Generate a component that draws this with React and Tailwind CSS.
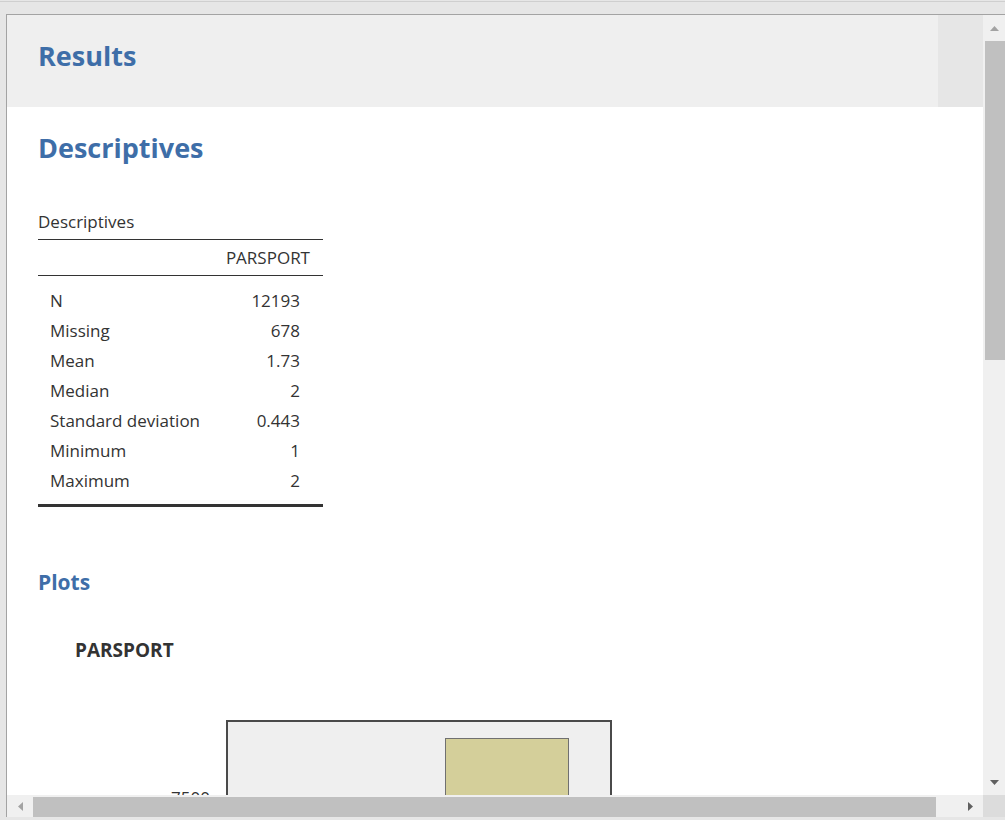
import React from 'react';

const rows = [
  ['N', '12193'],
  ['Missing', '678'],
  ['Mean', '1.73'],
  ['Median', '2'],
  ['Standard deviation', '0.443'],
  ['Minimum', '1'],
  ['Maximum', '2'],
];

const Arrow = ({ dir, color }) => {
  const points = {
    up: '0,5 9,5 4.5,0',
    down: '0,0 9,0 4.5,5',
    left: '5,0 5,9 0,4.5',
    right: '0,0 0,9 5,4.5',
  }[dir];
  const vertical = dir === 'up' || dir === 'down';
  return (
    <svg width={vertical ? 9 : 5} height={vertical ? 5 : 9} viewBox={vertical ? '0 0 9 5' : '0 0 5 9'}>
      <polygon points={points} fill={color} />
    </svg>
  );
};

const App = () => {
  return (
    <div
      className="w-[1005px] h-[820px] bg-[#e6e6e6] overflow-hidden flex flex-col"
      style={{ fontFamily: '"Open Sans", "Noto Sans", sans-serif' }}
    >
      {/* top strip */}
      <div className="mt-px h-[13px] border-t border-[#cfcfcf]" />

      <div className="pl-[6px]">
        <div className="border-l border-t border-[#a3a3a3] flex flex-col">
          <div className="flex h-[780px]">
            {/* content */}
            <div className="flex-1 bg-white overflow-hidden">
              <div className="flex h-[92px]">
                <div className="flex-1 bg-[#efefef] pl-[31px] pt-[23px]">
                  <h1 className="text-[27px] leading-[36px] font-bold text-[#3e6ea8]">Results</h1>
                </div>
                <div className="w-[45px] bg-[#e6e6e6]" />
              </div>

              <div className="pl-[31px]">
                <h2 className="mt-[23px] text-[27px] leading-[36px] font-bold text-[#3e6ea8]">Descriptives</h2>

                <div className="mt-[44px] w-[285px] text-[17px] text-[#333]">
                  <div className="leading-[24px] pb-[5px]">Descriptives</div>
                  <div className="border-t border-b border-[#333] h-[37px] flex items-center justify-end pr-[13px] leading-[24px]">
                    PARSPORT
                  </div>
                  <div className="pt-[10px] pb-[8px] border-b-[3px] border-[#333]">
                    {rows.map(([label, value]) => (
                      <div key={label} className="flex justify-between h-[30px] leading-[30px] pl-[12px] pr-[23px]">
                        <span>{label}</span>
                        <span>{value}</span>
                      </div>
                    ))}
                  </div>
                </div>

                <h3 className="mt-[61px] text-[21px] leading-[28px] font-bold text-[#3e6ea8]">Plots</h3>

                <div className="mt-[42px] pl-[37px] text-[19px] leading-[24px] font-bold text-[#333]">PARSPORT</div>

                <div className="mt-[58px] flex">
                  <div className="w-[188px] pr-[16px] pt-[66px] text-right text-[17px] leading-[24px] text-[#333]">7500</div>
                  <div className="w-[386px] h-[320px] border-2 border-[#4a4a4a] bg-[#efefef] pl-[217px] pt-[16px]">
                    <div className="w-[124px] h-[300px] border border-[#707070] bg-[#d4cf9a]" />
                  </div>
                </div>
              </div>
            </div>

            {/* vertical scrollbar */}
            <div className="w-[22px] bg-[#f0f0f0] flex flex-col">
              <div className="h-[26px] flex items-center justify-center">
                <Arrow dir="up" color="#a3a3a3" />
              </div>
              <div className="h-[319px] ml-[2px] bg-[#c0c0c0]" />
              <div className="flex-1" />
              <div className="h-[26px] flex items-center justify-center">
                <Arrow dir="down" color="#606060" />
              </div>
            </div>
          </div>

          {/* horizontal scrollbar */}
          <div className="h-[22px] flex">
            <div className="flex-1 bg-[#f0f0f0] flex">
              <div className="w-[26px] flex items-center justify-center">
                <Arrow dir="left" color="#a3a3a3" />
              </div>
              <div className="w-[903px] mt-[2px] bg-[#c0c0c0]" />
              <div className="flex-1" />
              <div className="w-[26px] flex items-center justify-center">
                <Arrow dir="right" color="#606060" />
              </div>
            </div>
            <div className="w-[22px] bg-[#dcdcdc]" />
          </div>
        </div>
      </div>
    </div>
  );
};

export default App;
